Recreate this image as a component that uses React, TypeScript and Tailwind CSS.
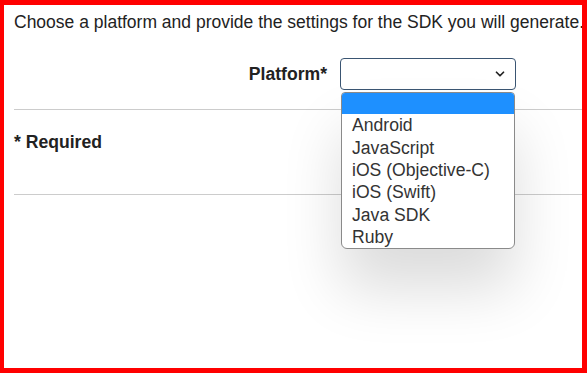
import { ChevronDown } from 'lucide-react'

const platforms = ['Android', 'JavaScript', 'iOS (Objective-C)', 'iOS (Swift)', 'Java SDK', 'Ruby']

export default function App() {
  return (
    <div
      className="h-screen w-full overflow-hidden border-[5px] border-l-4 border-[#ff0000] bg-white text-[17.6px] leading-[1.15] text-[#222]"
      style={{ fontFamily: '"Liberation Sans", Arial, sans-serif' }}
    >
      <div className="pt-[7px] pl-[10px]">
        <p className="whitespace-nowrap text-[17.5px]">
          Choose a platform and provide the settings for the SDK you will generate.
        </p>

        {/* Platform field */}
        <div className="mt-[26px] flex items-center gap-[13px]">
          <label className="w-[313px] text-right font-bold">Platform*</label>
          <div className="relative">
            <div className="flex h-[32px] w-[176px] items-center justify-end rounded-[4px] border border-[#3a5572] bg-white pr-[8px]">
              <ChevronDown className="h-[14px] w-[14px] text-[#222]" strokeWidth={3} />
            </div>

            {/* open native dropdown */}
            <ul className="absolute left-[1px] top-[34px] z-10 w-[174px] overflow-hidden rounded-b-[6px] rounded-t-[4px] border border-[#8a8a8a] bg-white text-[17.6px] text-[#333] shadow-[0_40px_60px_rgba(0,0,0,0.14)]">
              <li className="h-[21px] bg-[#1e90ff]" />
              {platforms.map((p) => (
                <li key={p} className="flex h-[22.4px] items-center pl-[10px] whitespace-nowrap">
                  {p}
                </li>
              ))}
            </ul>
          </div>
        </div>

        <hr className="mt-[19px] border-t border-[#cccccc]" />
        <p className="mt-[22px] font-bold">* Required</p>
        <hr className="mt-[42px] border-t border-[#cccccc]" />
      </div>
    </div>
  )
}
